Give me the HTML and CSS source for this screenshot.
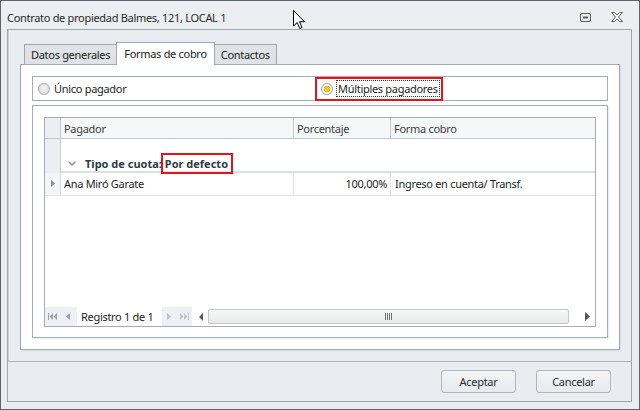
FILE: index.html
```html
<!DOCTYPE html>
<html lang="es">
<head>
    <meta charset="UTF-8">
    <title>Contrato de propiedad</title>
    <link rel="stylesheet" href="styles.css">
</head>
<body>
    <div class="window">
        <div class="titlebar">
            <span class="title">Contrato de propiedad Balmes, 121, LOCAL 1</span>
            <div class="tb-icons">
                <svg width="11" height="9" viewBox="0 0 11 9"><rect x="0.5" y="0.5" width="10" height="8" rx="1.5" fill="none" stroke="#5a5e64"/><rect x="3" y="3.5" width="5" height="2" fill="#5a5e64"/></svg>
                <svg width="12" height="10" viewBox="0 0 12 10"><polygon points="0.5,0.5 3.5,0.5 6,3 8.5,0.5 11.5,0.5 7.5,5 11.5,9.5 8.5,9.5 6,7 3.5,9.5 0.5,9.5 4.5,5" fill="#fff" stroke="#5a5e64" stroke-linejoin="round"/></svg>
            </div>
        </div>

        <div class="frame">
            <div class="body">
                <div class="tabs">
                    <div class="tab">Datos generales</div>
                    <div class="tab active">Formas de cobro</div>
                    <div class="tab">Contactos</div>
                </div>
                <div class="page">
                    <div class="radios">
                        <div class="radio"><span class="dot"></span>Único pagador</div>
                        <div class="radio checked"><span class="dot"></span><span class="focus">Múltiples pagadores</span></div>
                    </div>
                    <div class="gridbox">
                        <div class="grid">
                            <div class="row head">
                                <div class="cell ind"></div>
                                <div class="cell">Pagador</div>
                                <div class="cell">Porcentaje</div>
                                <div class="cell last">Forma cobro</div>
                            </div>
                            <div class="group-row">
                                <div class="cell ind"></div>
                                <div class="group-text">
                                    <svg class="chev" width="8" height="5" viewBox="0 0 8 5"><path d="M0.5 0.5 L4 4 L7.5 0.5" fill="none" stroke="#8a8e94" stroke-width="1.3"/></svg>
                                    <b>Tipo de cuota:</b><b class="mark">Por defecto</b>
                                </div>
                            </div>
                            <div class="row data">
                                <div class="cell ind"><svg width="4" height="7" viewBox="0 0 4 7"><path d="M0 0 L4 3.5 L0 7 Z" fill="#8a8e94"/></svg></div>
                                <div class="cell">Ana Miró Garate</div>
                                <div class="cell num">100,00%</div>
                                <div class="cell last">Ingreso en cuenta/ Transf.</div>
                            </div>
                            <div class="spacer"></div>
                            <div class="nav">
                                <div class="nav-btns">
                                    <svg width="9" height="7" viewBox="0 0 9 7"><rect x="0" y="0" width="1" height="7" fill="#9ea2a8"/><path d="M5 0 L1.5 3.5 L5 7 Z M9 0 L5.5 3.5 L9 7 Z" fill="#9ea2a8"/></svg>
                                    <svg width="4" height="7" viewBox="0 0 4 7"><path d="M4 0 L0 3.5 L4 7 Z" fill="#9ea2a8"/></svg>
                                </div>
                                <div class="nav-text">Registro 1 de 1</div>
                                <div class="nav-btns next">
                                    <svg width="4" height="7" viewBox="0 0 4 7"><path d="M0 0 L4 3.5 L0 7 Z" fill="#c0c4ca"/></svg>
                                    <svg width="9" height="7" viewBox="0 0 9 7"><path d="M0 0 L3.5 3.5 L0 7 Z M4 0 L7.5 3.5 L4 7 Z" fill="#c0c4ca"/><rect x="8" y="0" width="1" height="7" fill="#c0c4ca"/></svg>
                                </div>
                                <div class="hscroll">
                                    <svg width="4" height="8" viewBox="0 0 4 8"><path d="M4 0 L0 4 L4 8 Z" fill="#55595f"/></svg>
                                    <div class="thumb"><span class="grip"></span></div>
                                    <svg width="5" height="9" viewBox="0 0 5 9"><path d="M0 0 L5 4.5 L0 9 Z" fill="#55595f"/></svg>
                                </div>
                            </div>
                        </div>
                    </div>
                </div>
            </div>
            <div class="buttons">
                <button class="btn">Aceptar</button>
                <button class="btn">Cancelar</button>
            </div>
        </div>

        <svg class="cursor" width="13" height="20" viewBox="0 0 13 20"><path d="M0.5 0.5 L0.5 16 L4.2 12.5 L6.8 18.5 L9 17.5 L6.5 11.7 L11.5 11.7 Z" fill="#fff" stroke="#000" stroke-linejoin="round"/></svg>
    </div>
</body>
</html>
```

FILE: styles.css
```css
body {
    margin: 0;
    font-family: "Noto Sans", "DejaVu Sans", sans-serif;
    font-size: 11px;
    letter-spacing: -0.3px;
    color: #1e1e1e;
}

b {
    letter-spacing: 0;
}

.window {
    position: relative;
    width: 640px;
    height: 410px;
    box-sizing: border-box;
    border: 1px solid #5f636a;
    background: #e9ecf0;
}

/* title bar */
.titlebar {
    height: 28px;
    box-sizing: border-box;
    padding: 4px 0 0 6px;
    display: flex;
    align-items: center;
    background: #eceef1;
}

.title {
    color: #2a2a2a;
    flex: 1;
}

.tb-icons {
    display: flex;
    align-items: center;
    gap: 20px;
    margin-right: 16px;
}

/* dialog frame */
.frame {
    margin: 0 7px 0 6px;
    height: 373px;
    box-sizing: border-box;
    border: 1px solid #a3a7ad;
    display: flex;
    flex-direction: column;
}

.body {
    height: 332px;
    box-sizing: border-box;
    border-left: 1px solid #cdd1d6;
    border-bottom: 1px solid #aeb2b8;
    padding: 12px 11px 0 11px;
}

.tabs {
    height: 22px;
    display: flex;
    align-items: flex-end;
    padding-left: 4px;
}

.tab {
    height: 20px;
    box-sizing: border-box;
    border: 1px solid #a3a7ad;
    border-bottom: none;
    background: #dfe2e6;
    padding: 0 6px;
    margin-right: -1px;
    display: flex;
    align-items: center;
    color: #222;
}

.tab.active {
    position: relative;
    z-index: 1;
    height: 23px;
    margin-bottom: -1px;
    background: #fff;
    padding: 0 7px 1px;
}

.page {
    height: 286px;
    box-sizing: border-box;
    border: 1px solid #a3a7ad;
    background: #fff;
    padding: 11px;
    box-shadow: 1px 1px 2px rgba(0, 0, 0, 0.08);
}

/* radio group */
.radios {
    height: 25px;
    box-sizing: border-box;
    border: 1px solid #a9adb3;
    display: grid;
    grid-template-columns: 1fr 1fr;
    align-items: center;
}

.radio {
    display: flex;
    align-items: center;
    padding-left: 5px;
    color: #1e1e1e;
}

.radio.checked {
    position: relative;
    padding-left: 1px;
}

.radio.checked::after {
    content: "";
    position: absolute;
    left: -5px;
    top: -4px;
    width: 128px;
    height: 24px;
    box-sizing: border-box;
    border: 2px solid #e5141b;
}

.dot {
    width: 12px;
    height: 12px;
    box-sizing: border-box;
    border-radius: 50%;
    border: 1px solid #a4a8ae;
    background: radial-gradient(circle at 50% 40%, #f4f5f6, #d4d6d9);
    margin-right: 4px;
}

.checked .dot {
    background: radial-gradient(circle, #ffd23a 0, #f0b400 3px, #fff 3.6px, #e8e9eb 6px);
}

.focus {
    outline: 1px dotted #333;
    outline-offset: 0;
    padding: 0 1px;
}

/* grid */
.gridbox {
    margin-top: 4px;
    height: 233px;
    box-sizing: border-box;
    border: 1px solid #a9adb3;
    padding: 11px 11px 10px;
    box-shadow: 1px 1px 2px rgba(0, 0, 0, 0.08);
}

.grid {
    height: 210px;
    box-sizing: border-box;
    border: 1px solid #a8acb2;
    display: flex;
    flex-direction: column;
}

.row {
    display: grid;
    grid-template-columns: 16px 233px 97px 1fr;
}

.cell {
    box-sizing: border-box;
    padding-left: 3px;
    display: flex;
    align-items: center;
}

.cell.ind {
    padding: 0;
    justify-content: center;
    background: #eceef1;
    border-right: 1px solid #c8ccd1;
}

.head {
    height: 20px;
    border-bottom: 1px solid #c3c7cc;
    background: #f6f7f8;
    color: #3c3c3c;
}

.head .cell {
    border-right: 1px solid #c3c7cc;
}

.head .cell.last {
    border-right: none;
}

.group-row {
    height: 34px;
    display: grid;
    grid-template-columns: 16px 1fr;
}

.group-text {
    border-bottom: 2px solid #dcdee1;
    display: flex;
    align-items: flex-end;
    padding: 0 0 0 7px;
    color: #2e3b48;
}

.chev {
    margin: 0 9px 5px 0;
}

.mark {
    position: relative;
    margin-left: 3px;
}

.mark::after {
    content: "";
    position: absolute;
    left: -4px;
    top: -3px;
    right: -5px;
    bottom: -3px;
    border: 2px solid #e5141b;
}

.data {
    height: 22px;
    border-bottom: 1px solid #e2e4e7;
}

.data .cell {
    border-right: 1px solid #e2e4e7;
    padding-bottom: 1px;
}

.data .cell.ind {
    background: #f4f5f7;
    border-right: 1px solid #d7dade;
}

.data .cell.last {
    border-right: none;
    padding-left: 4px;
}

.cell.num {
    justify-content: flex-end;
    padding: 0 3px 1px 0;
}

.spacer {
    flex: 1;
}

/* navigator and scrollbar */
.nav {
    height: 19px;
    display: flex;
    background: #eef0f3;
}

.nav-btns {
    display: flex;
    align-items: center;
    gap: 9px;
    padding: 0 7px 0 3px;
}

.nav-btns.next {
    padding: 0 3px 0 5px;
}

.nav-text {
    background: #fff;
    display: flex;
    align-items: center;
    padding: 0 8px 0 4px;
    white-space: nowrap;
    color: #1e1e1e;
}

.hscroll {
    flex: 1;
    display: flex;
    align-items: center;
    background: #fff;
    padding: 0 5px 0 7px;
    gap: 5px;
}

.thumb {
    flex: 1;
    height: 15px;
    box-sizing: border-box;
    border: 1px solid #c4c8ce;
    border-radius: 2px;
    background: linear-gradient(#f6f7f8, #e7e9ec);
    display: flex;
    align-items: center;
    justify-content: center;
    margin-right: 11px;
}

.grip {
    width: 7px;
    height: 7px;
    background: repeating-linear-gradient(90deg, #6e7278 0 1px, transparent 1px 2px);
}

/* dialog buttons */
.buttons {
    flex: 1;
    display: flex;
    justify-content: flex-end;
    align-items: center;
    gap: 20px;
    padding-right: 20px;
}

.btn {
    width: 75px;
    height: 23px;
    border: 1px solid #b2b6bc;
    border-radius: 3px;
    background: linear-gradient(#f3f4f6, #e8eaed);
    font-family: inherit;
    font-size: 11px;
    letter-spacing: -0.3px;
    color: #2a2a2a;
    padding: 0;
}

.cursor {
    position: absolute;
    left: 292px;
    top: 9px;
}
```
